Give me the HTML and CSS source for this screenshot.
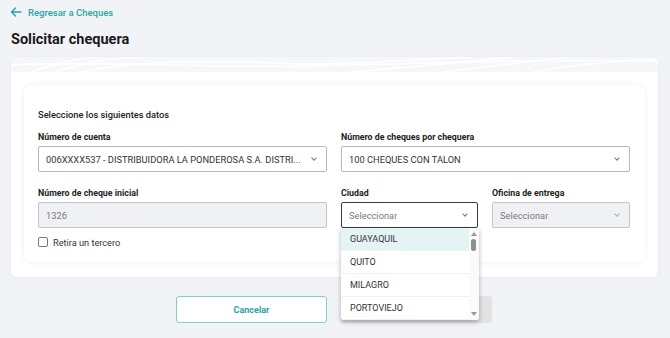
FILE: index.html
```html
<!DOCTYPE html>
<html lang="es">
<head>
    <meta charset="UTF-8">
    <title>Solicitar chequera</title>
    <link rel="stylesheet" href="styles.css">
</head>
<body>
    <a href="#" class="back-link">
        <svg width="12" height="10" viewBox="0 0 12 10"><path d="M11 5H1.5M5.5 1L1.5 5l4 4" fill="none" stroke="#2aa3a6" stroke-width="1.4" stroke-linecap="round" stroke-linejoin="round"/></svg>
        Regresar a Cheques
    </a>
    <h1 class="page-title">Solicitar chequera</h1>

    <div class="panel">
        <div class="panel-band">
            <svg viewBox="0 0 646 15" preserveAspectRatio="none">
                <path d="M20 15 C40 8 60 2 90 0" />
                <path d="M45 15 C70 6 95 1 130 0" />
                <path d="M70 15 C120 4 200 3 260 6 C320 9 380 4 460 0" />
                <path d="M0 8 C100 3 200 12 300 9 C420 6 520 2 646 4" />
                <path d="M340 15 C400 10 440 6 500 0" />
                <path d="M430 15 C480 9 520 4 560 0" />
                <path d="M520 15 C560 8 600 4 646 2" />
            </svg>
        </div>
        <div class="form-card">
            <p class="form-heading">Seleccione los siguientes datos</p>
            <div class="form-grid">
                <div class="field">
                    <label class="field-label">Número de cuenta</label>
                    <div class="select">
                        <span class="select-value">006XXXX537 - DISTRIBUIDORA LA PONDEROSA S.A. DISTRI...</span>
                        <span class="chevron"></span>
                    </div>
                </div>
                <div class="field">
                    <label class="field-label">Número de cheques por chequera</label>
                    <div class="select">
                        <span class="select-value">100 CHEQUES CON TALON</span>
                        <span class="chevron"></span>
                    </div>
                </div>
                <div class="field">
                    <label class="field-label">Número de cheque inicial</label>
                    <div class="select disabled">
                        <span class="select-value muted">1326</span>
                    </div>
                    <label class="check-row">
                        <span class="checkbox"></span>
                        Retira un tercero
                    </label>
                </div>
                <div class="sub-grid">
                    <div class="field">
                        <label class="field-label">Ciudad</label>
                        <div class="select focused">
                            <span class="select-value muted">Seleccionar</span>
                            <span class="chevron"></span>
                        </div>
                        <div class="dropdown">
                            <ul class="dropdown-list">
                                <li class="active">GUAYAQUIL</li>
                                <li>QUITO</li>
                                <li>MILAGRO</li>
                                <li>PORTOVIEJO</li>
                            </ul>
                            <div class="scrollbar">
                                <span class="arrow up"></span>
                                <span class="thumb"></span>
                                <span class="arrow down"></span>
                            </div>
                        </div>
                    </div>
                    <div class="field">
                        <label class="field-label">Oficina de entrega</label>
                        <div class="select disabled">
                            <span class="select-value muted">Seleccionar</span>
                            <span class="chevron light"></span>
                        </div>
                    </div>
                </div>
            </div>
        </div>
    </div>

    <div class="actions">
        <button class="btn btn-outline">Cancelar</button>
        <button class="btn btn-disabled">Solicitar</button>
    </div>
</body>
</html>
```

FILE: styles.css
```css
* {
    margin: 0;
    padding: 0;
    box-sizing: border-box;
}

body {
    font-family: Roboto, 'Liberation Sans', Arial, sans-serif;
    background: #f2f3f7;
    color: #222;
    width: 670px;
    height: 338px;
    overflow: hidden;
}

.back-link {
    display: flex;
    align-items: center;
    gap: 6px;
    padding: 5px 10px 0;
    height: 19px;
    font-size: 9.5px;
    font-weight: 500;
    color: #2aa3a6;
    text-decoration: none;
}

.page-title {
    margin: 12px 11px 0;
    font-size: 14.5px;
    font-weight: 700;
    color: #1a1a1a;
    height: 17px;
    line-height: 17px;
}

.panel {
    margin: 9px 12px 0 11px;
    padding-bottom: 15px;
    background: #fff;
    border-radius: 6px;
    box-shadow: 0 0 4px rgba(0,0,0,0.04);
}

.panel-band {
    height: 15px;
    background: #f6f7f9;
    border-radius: 6px 6px 0 0;
    overflow: hidden;
}

.panel-band svg {
    display: block;
    width: 100%;
    height: 15px;
}

.panel-band path {
    fill: none;
    stroke: #ffffff;
    stroke-width: 1.6;
}

.form-card {
    margin: 13px 13px 0;
    padding: 24px 14px 15px;
    border-radius: 8px;
    background: #fff;
    box-shadow: 0 0 6px rgba(0,0,0,0.07);
}

.form-heading {
    font-size: 9.3px;
    font-weight: 500;
    color: #222;
    height: 12px;
    line-height: 12px;
    margin-bottom: 10px;
}

.form-grid {
    display: grid;
    grid-template-columns: 289px 289px;
    column-gap: 14px;
    row-gap: 15px;
}

.sub-grid {
    display: grid;
    grid-template-columns: 137px 138px;
    column-gap: 14px;
}

.field {
    position: relative;
}

.field-label {
    display: block;
    font-size: 8.8px;
    font-weight: 700;
    color: #222;
    margin-bottom: 3px;
    height: 12px;
    line-height: 12px;
}

.select {
    display: flex;
    align-items: center;
    justify-content: space-between;
    gap: 6px;
    height: 26px;
    padding: 0 10px 0 7px;
    border: 1px solid #b8b8b8;
    border-radius: 2px;
    background: #fff;
    font-size: 9.3px;
    color: #333;
}

.select.disabled {
    background: #f0f1f4;
    border-color: #c6c6c6;
}

.select.focused {
    border-color: #3b3b3b;
}

.select-value {
    white-space: nowrap;
    overflow: hidden;
    text-overflow: ellipsis;
}

.select-value.muted {
    color: #7a7a7a;
}

.chevron {
    width: 4px;
    height: 4px;
    border-right: 1px solid #777;
    border-bottom: 1px solid #777;
    transform: rotate(45deg);
    margin-top: -3px;
    flex-shrink: 0;
}

.chevron.light {
    border-color: #aaa;
}

.check-row {
    display: flex;
    align-items: center;
    gap: 5px;
    margin-top: 9px;
    height: 10px;
    font-size: 9.2px;
    color: #333;
}

.checkbox {
    width: 10px;
    height: 10px;
    border: 1px solid #777;
    border-radius: 2px;
    background: #fff;
}

.dropdown {
    position: absolute;
    top: 41px;
    left: 0;
    width: 138px;
    height: 92px;
    display: flex;
    background: #fff;
    border-radius: 0 0 3px 3px;
    box-shadow: 0 2px 5px rgba(0,0,0,0.3);
    z-index: 5;
    overflow: hidden;
}

.dropdown-list {
    list-style: none;
    flex: 1;
}

.dropdown-list li {
    height: 23px;
    line-height: 23px;
    padding-left: 9px;
    font-size: 9px;
    color: #333;
    border-bottom: 1px solid #f1f1f1;
}

.dropdown-list li.active {
    background: #e4f3f3;
}

.scrollbar {
    position: relative;
    width: 10px;
    background: #fafafa;
}

.thumb {
    position: absolute;
    left: 2px;
    top: 11px;
    width: 5px;
    height: 12px;
    border-radius: 3px;
    background: #8e8e8e;
}

.arrow {
    position: absolute;
    left: 2px;
    width: 0;
    height: 0;
    border-left: 3px solid transparent;
    border-right: 3px solid transparent;
}

.arrow.up {
    top: 4px;
    border-bottom: 4px solid #999;
}

.arrow.down {
    bottom: 4px;
    border-top: 4px solid #999;
}

.actions {
    display: flex;
    justify-content: center;
    gap: 14px;
    margin-top: 19px;
    padding-right: 2px;
}

.btn {
    width: 151px;
    height: 27px;
    border-radius: 3px;
    font-family: Roboto, sans-serif;
    font-size: 9px;
    font-weight: 700;
}

.btn-outline {
    background: #fff;
    border: 1px solid #7fcfcf;
    color: #2aa3a6;
}

.btn-disabled {
    background: #e2e2e2;
    border: none;
    color: #9a9a9a;
}
```
